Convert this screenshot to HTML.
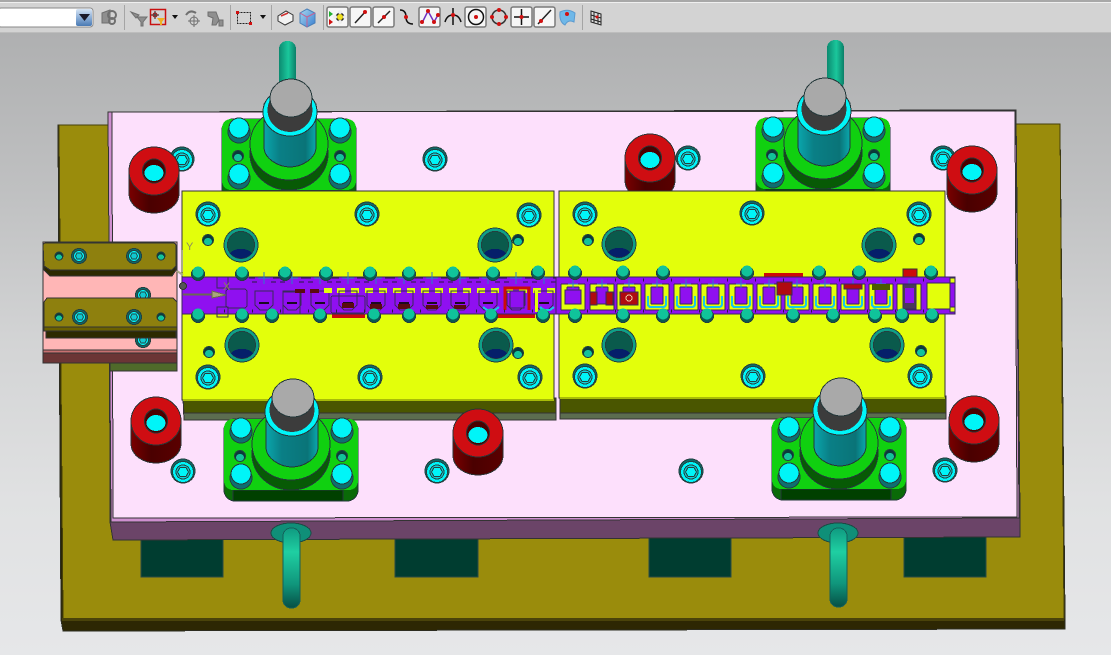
<!DOCTYPE html>
<html><head><meta charset="utf-8"><title>CAD stamping die</title>
<style>html,body{margin:0;padding:0;width:1111px;height:655px;overflow:hidden;background:#d0d0d0}svg{display:block}</style></head>
<body>
<svg xmlns="http://www.w3.org/2000/svg" width="1111" height="655" viewBox="0 0 1111 655" font-family="'Liberation Sans',sans-serif">
<defs>
<linearGradient id="bg" x1="0" y1="0" x2="0" y2="1"><stop offset="0" stop-color="#afb0b1"/><stop offset=".25" stop-color="#bfc0c1"/><stop offset=".5" stop-color="#d3d4d5"/><stop offset=".75" stop-color="#e0e1e2"/><stop offset="1" stop-color="#e6e7e9"/></linearGradient>
<linearGradient id="rod" x1="0" y1="0" x2="1" y2="0"><stop offset="0" stop-color="#0c8a70"/><stop offset=".55" stop-color="#1ac79c"/><stop offset="1" stop-color="#0b7f68"/></linearGradient>
<linearGradient id="rodv" x1="0" y1="0" x2="0" y2="1"><stop offset="0" stop-color="#0f9a80"/><stop offset=".3" stop-color="#1fcfa2"/><stop offset=".7" stop-color="#10967c"/><stop offset="1" stop-color="#064f45"/></linearGradient>
<linearGradient id="teal" x1="0" y1="0" x2="1" y2="0"><stop offset="0" stop-color="#0aa6ac"/><stop offset=".3" stop-color="#0a7f86"/><stop offset=".8" stop-color="#0a7478"/><stop offset="1" stop-color="#0aa8ae"/></linearGradient>
<linearGradient id="red" x1="0" y1="0" x2="1" y2="0"><stop offset="0" stop-color="#7a0000"/><stop offset=".4" stop-color="#4a0000"/><stop offset="1" stop-color="#5a0000"/></linearGradient>
<linearGradient id="btn" x1="0" y1="0" x2="0" y2="1"><stop offset="0" stop-color="#d6e4f4"/><stop offset=".5" stop-color="#8eb0d8"/><stop offset="1" stop-color="#4a7ab4"/></linearGradient>
<linearGradient id="cube" x1="0" y1="0" x2="1" y2="1"><stop offset="0" stop-color="#a8d8f0"/><stop offset="1" stop-color="#3a7fd0"/></linearGradient>

<g id="screw" stroke="#24403f" stroke-width="1">
<circle r="12" fill="#0d6a6a"/>
<circle cy="1" r="10.500" fill="#00f5f8"/>
<circle cy="1" r="7" fill="#10d0d8"/>
<polygon points="-5.500,1 -3,-3.500 3,-3.500 5.500,1 3,5.500 -3,5.500" fill="#00f5f8"/>
</g>
<g id="smallscrew" stroke="#24403f" stroke-width="1">
<circle r="7.500" fill="#0d6a6a"/><circle r="5.500" fill="#00f5f8"/><polygon points="-3.500,0 -2,-3 2,-3 3.500,0 2,3 -2,3" fill="#12c8d0"/>
</g>
<g id="mini" stroke="#24403f" stroke-width="1"><circle r="5.500" fill="#0a3a3a"/><ellipse cy="1.500" rx="4" ry="3.500" fill="#12c39a" stroke="none"/></g>
<g id="mini2" stroke="#24403f" stroke-width="1"><circle r="4" fill="#0a3a3a"/><ellipse cy="1" rx="3" ry="2.500" fill="#12c39a" stroke="none"/></g>
<g id="bigh" stroke="#24403f" stroke-width="1">
<circle r="17" fill="#0fa088"/><circle r="13.500" fill="#0a5a4c"/>
<path d="M-11 8 A13 9 0 0 1 11 8 A14 14 0 0 1 -11 8Z" fill="#051f6a" stroke="none"/>
</g>
<g id="pin"><circle r="6.500" cy="2" fill="#0a5a50" stroke="#24403f"/><circle r="5.500" fill="#10c39a"/></g>
<g id="boss" stroke="#2b3535" stroke-width="1">
<path d="M-25 0 V22 C-25 35 -12 42 0 42 S25 35 25 22 V0Z" fill="url(#red)"/>
<ellipse rx="25" ry="24" fill="#cf0d12"/>
<ellipse rx="11.500" ry="12" fill="#4a0000"/>
<ellipse cy="2" rx="9.500" ry="8" fill="#00f5f8" stroke="none"/>
</g>
<g id="hole4"><circle cy="4" r="11" fill="#0e6f70" stroke="#24403f"/><circle r="10" fill="#00f5f8" stroke="#24403f"/></g>
<g id="pillar" stroke="#24383a" stroke-width="1">
<rect x="-69" y="40" width="134" height="82" rx="11" fill="#0a6a08"/>
<path d="M-60 111 H50 V122 H-60Z" fill="#004000"/>
<rect x="-69" y="40" width="134" height="71" rx="9" fill="#10d010" stroke="none"/>
<use href="#hole4" x="-52" y="49"/><use href="#hole4" x="49" y="49"/><use href="#hole4" x="-52" y="95"/><use href="#hole4" x="49" y="95"/>
<use href="#mini" x="-53" y="77"/><use href="#mini" x="49" y="77"/>
<ellipse cx="-2" cy="75" rx="39" ry="36" fill="#075a05"/>
<ellipse cx="-2" cy="65" rx="39" ry="36" fill="#10d010"/>
<path d="M-27 25 V68 C-27 80 -12 88 -1 88 S25 80 25 68 V25Z" fill="url(#teal)"/>
<ellipse cx="-1" cy="33" rx="27" ry="24" fill="#00f5f8"/>
<ellipse cx="-1" cy="31" rx="22.500" ry="22" fill="#3c3c3c" stroke="none"/>
<rect x="-21" y="19" width="42" height="12" fill="#3c3c3c" stroke="none"/>
<ellipse cy="19" rx="21" ry="19" fill="#a9a9a9"/>
</g>
<g id="sta0" fill="none" stroke="#3a2a5a" stroke-width="1">
<path d="M-6 -5 H6 M0 -11 V1" stroke="#2a80c8"/>
<path d="M-15 -5 H-9 M9 -5 H15 M-12 -1 H-7 M7 -1 H12" stroke="#2a1a40"/>
<path d="M-9 8 H9 V22 L4 27 H-4 L-9 22Z"/>
<path d="M-5 20 H5" stroke="#1a0a20" stroke-width="2"/>
</g>
<g id="sta">
<rect x="-11" y="5" width="8" height="5" fill="#e3ff0b"/><rect x="3" y="5" width="8" height="5" fill="#e3ff0b"/>
<use href="#sta0"/>
</g>
<g id="cell0" stroke="#3a2a5a" stroke-width="1">
<rect x="-12" y="0" width="24" height="26" rx="1" fill="#e3ff0b"/>
<rect x="-6" y="3" width="12" height="17" rx="1" fill="#8f10f0"/>
<path d="M-5 0 H5 M0 -5 V4" stroke="#2a80c8" fill="none"/>
</g>
<g id="cell">
<use href="#cell0"/>
<path d="M-9 12 V20 Q-9 23 -6 23 H6 Q9 23 9 20 V12" fill="none" stroke="#17c8e8" stroke-width="2"/>
</g>
</defs>

<!-- background -->
<rect y="33" width="1111" height="622" fill="url(#bg)"/>

<g shape-rendering="crispEdges">
<!-- base plate -->
<polygon points="58,125 1060,124 1065,619 1065,629 63,631 61,620" fill="#2d2703" stroke="#2c2c20"/>
<polygon points="59,125 1060,124 1064,619 63,620" fill="#9a8c0c" stroke="#46400a"/>
<rect x="62" y="618" width="1002" height="3" fill="#4a430a"/>

<!-- feet -->
<g fill="#003d30" stroke="#2b4a44">
<rect x="141" y="535" width="82" height="42"/><rect x="395" y="535" width="83" height="42"/><rect x="649" y="535" width="82" height="42"/><rect x="904" y="535" width="82" height="42"/>
</g>

<!-- pink plate -->
<polygon points="109,112 1016,110 1020,517 1020,537 113,540 110,522" fill="#6b4468" stroke="#333"/>
<polygon points="108,112 1016,110 1019,518 111,522" fill="#cf8fd0" stroke="#333"/>
<polygon points="112,112 1015,111 1017,517 113,518" fill="#fde0fc" stroke="#333"/>

<!-- lower rods + collars -->
<g stroke="#1c4a44">
<ellipse cx="291" cy="533" rx="20" ry="10" fill="#0f8f78"/>
<ellipse cx="838" cy="533" rx="20" ry="10" fill="#0f8f78"/>
</g>
<rect x="283" y="528" width="17" height="80" rx="8" fill="url(#rodv)" stroke="#14605a"/>
<rect x="830" y="528" width="17" height="79" rx="8" fill="url(#rodv)" stroke="#14605a"/>

<!-- upper rods -->
<rect x="279" y="41" width="17" height="50" rx="8" fill="url(#rod)"/>
<rect x="827" y="40" width="17" height="50" rx="8" fill="url(#rod)"/>

<!-- pink-plate screws -->
<use href="#screw" x="182" y="159"/><use href="#screw" x="435" y="159"/><use href="#screw" x="688" y="158"/><use href="#screw" x="943" y="158"/>
<use href="#screw" x="183" y="471"/><use href="#screw" x="437" y="471"/><use href="#screw" x="691" y="471"/><use href="#screw" x="945" y="470"/>

<!-- top pillars (under yellow plates) -->
<use href="#pillar" x="291" y="79"/>
<use href="#pillar" x="825" y="78"/>

<!-- red bosses under plates -->
<use href="#boss" x="154" y="171"/><use href="#boss" x="650" y="158"/><use href="#boss" x="972" y="170"/>
<use href="#boss" x="156" y="421"/><use href="#boss" x="974" y="420"/>

<!-- yellow plates -->
<g stroke="#333">
<polygon points="183,398 556,398 556,420 184,420" fill="#5c6d50"/>
<polygon points="183,398 556,398 556,413 184,413" fill="#4a5600"/>
<polygon points="560,398 946,396 946,419 560,419" fill="#5c6d50"/>
<polygon points="560,398 946,396 946,413 560,413" fill="#4a5600"/>
<rect x="182" y="191" width="372" height="209" fill="#e3ff0b"/>
<rect x="559" y="191" width="386" height="207" fill="#e3ff0b"/>
</g>
<path d="M183 400 H554 M560 398 H945" stroke="#a8bc08" stroke-width="2"/>

<use href="#boss" x="478" y="433"/>

<!-- yellow plate screws -->
<use href="#screw" x="208" y="214"/><use href="#screw" x="367" y="214"/><use href="#screw" x="529" y="215"/><use href="#screw" x="585" y="214"/><use href="#screw" x="752" y="213"/><use href="#screw" x="919" y="214"/>
<use href="#screw" x="208" y="377"/><use href="#screw" x="370" y="377"/><use href="#screw" x="530" y="377"/><use href="#screw" x="585" y="376"/><use href="#screw" x="753" y="376"/><use href="#screw" x="920" y="376"/>
<use href="#bigh" x="241" y="245"/><use href="#bigh" x="495" y="245"/><use href="#bigh" x="619" y="244"/><use href="#bigh" x="879" y="245"/>
<use href="#bigh" x="242" y="345"/><use href="#bigh" x="496" y="345"/><use href="#bigh" x="619" y="345"/><use href="#bigh" x="887" y="345"/>
<use href="#mini" x="208" y="240"/><use href="#mini" x="209" y="352"/><use href="#mini" x="518" y="240"/><use href="#mini" x="518" y="353"/><use href="#mini" x="588" y="240"/><use href="#mini" x="588" y="352"/><use href="#mini" x="919" y="239"/><use href="#mini" x="921" y="351"/>

<!-- bottom pillars -->
<use href="#pillar" x="293" y="379"/>
<use href="#pillar" x="841" y="378"/>

<!-- strip: left solid -->
<rect x="332" y="313" width="33" height="5" fill="#cc0a0a"/>
<rect x="498" y="313" width="37" height="5" fill="#cc0a0a"/>
<rect x="764" y="273" width="39" height="6" fill="#cc0a0a"/>
<rect x="903" y="269" width="14" height="8" fill="#cc0a0a" stroke="#333"/>
<rect x="182" y="277" width="376" height="37" fill="#8f10f0" stroke="#3a2a5a"/>
<g fill="none" stroke="#3a2a5a">
<rect x="217" y="277" width="11" height="11"/><rect x="217" y="307" width="11" height="10"/>
<rect x="226" y="289" width="21" height="19" rx="3"/>
<rect x="283" y="292" width="17" height="22"/>
<rect x="331" y="296" width="34" height="17" rx="2"/>
</g>
<path d="M183 294 H212 V291 L226 295 L212 298 V295 H183" fill="#a9a77a" stroke="#6a6a50"/>
<circle cx="183" cy="286" r="3.500" fill="#555" stroke="#333"/>
<use href="#sta0" x="264" y="283"/><use href="#sta0" x="292" y="283"/><use href="#sta0" x="320" y="283"/>
<rect x="324" y="288" width="8" height="5" fill="#e3ff0b"/>
<use href="#sta" x="348" y="283"/><use href="#sta" x="376" y="283"/><use href="#sta" x="404" y="283"/><use href="#sta" x="432" y="283"/><use href="#sta" x="460" y="283"/><use href="#sta" x="488" y="283"/><use href="#sta" x="516" y="283"/><use href="#sta" x="544" y="283"/>
<g fill="#5a0a10">
<rect x="295" y="289" width="10" height="4"/><rect x="310" y="289" width="9" height="4"/>
<rect x="342" y="303" width="12" height="5"/><rect x="370" y="304" width="12" height="5"/><rect x="398" y="304" width="12" height="5"/>
<rect x="426" y="305" width="12" height="4"/><rect x="454" y="305" width="12" height="4"/>
</g>
<path d="M505 310 V288 H529 V310" fill="none" stroke="#cc0a0a" stroke-width="3"/>
<rect x="510" y="291" width="14" height="17" fill="#8f10f0" stroke="#3a2a5a"/>
<rect x="535" y="288" width="3" height="24" fill="#e3ff0b"/>
<path d="M483 307 L487 310 H495 L499 307 M540 307 L544 310 H550 L554 307" stroke="#17c8e8" stroke-width="2" fill="none"/>

<!-- strip: right lattice -->
<rect x="556" y="277" width="399" height="37" fill="#8f10f0" stroke="#3a2a5a"/>
<use href="#cell0" x="573" y="284"/><use href="#cell0" x="602" y="284"/><use href="#cell0" x="629" y="284"/><use href="#cell" x="657" y="284"/><use href="#cell" x="686" y="284"/><use href="#cell" x="713" y="284"/><use href="#cell" x="741" y="284"/><use href="#cell" x="769" y="284"/><use href="#cell" x="797" y="284"/><use href="#cell" x="825" y="284"/><use href="#cell" x="853" y="284"/><use href="#cell" x="881" y="284"/><use href="#cell0" x="909" y="284"/>
<rect x="927" y="283" width="23" height="26" fill="#e3ff0b" stroke="#3a2a5a"/>
<g fill="#b00a10" stroke="#3a2a5a">
<rect x="590" y="292" width="7" height="13"/><rect x="606" y="292" width="7" height="13"/>
<rect x="620" y="292" width="18" height="13"/>
<rect x="777" y="282" width="15" height="13"/>
<rect x="844" y="284" width="18" height="5"/>
</g>
<circle cx="629" cy="298" r="3" fill="none" stroke="#e8c8a0"/>
<rect x="872" y="284" width="18" height="6" fill="#4a5a00"/>
<rect x="903" y="284" width="13" height="25" fill="#4a3a5a" stroke="#3a2a5a"/>
<rect x="905" y="288" width="9" height="15" fill="#8f10f0"/>
<rect x="565" y="290" width="16" height="14" fill="#8f10f0" stroke="#3a2a5a"/>
<g stroke="#2a1a40" stroke-width="3" stroke-dasharray="1 27" fill="none">
<path d="M587 280 H955 M587 311 H955 M196 311 H550"/>
</g>
<rect x="950" y="278" width="5" height="5" fill="#e3ff0b" stroke="#3a2a5a"/>
<rect x="950" y="307" width="5" height="5" fill="#e3ff0b" stroke="#3a2a5a"/>

<!-- pilot pins -->
<use href="#pin" x="198" y="272"/><use href="#pin" x="242" y="272"/><use href="#pin" x="285" y="272"/><use href="#pin" x="326" y="272"/><use href="#pin" x="370" y="272"/><use href="#pin" x="409" y="272"/><use href="#pin" x="453" y="272"/><use href="#pin" x="493" y="272"/><use href="#pin" x="538" y="271"/>
<use href="#pin" x="575" y="271"/><use href="#pin" x="623" y="271"/><use href="#pin" x="663" y="271"/><use href="#pin" x="747" y="271"/><use href="#pin" x="819" y="271"/><use href="#pin" x="859" y="271"/><use href="#pin" x="931" y="271"/>
<use href="#pin" x="198" y="314"/><use href="#pin" x="242" y="314"/><use href="#pin" x="272" y="314"/><use href="#pin" x="320" y="314"/><use href="#pin" x="374" y="314"/><use href="#pin" x="409" y="314"/><use href="#pin" x="453" y="314"/><use href="#pin" x="491" y="314"/><use href="#pin" x="543" y="314"/>
<use href="#pin" x="575" y="314"/><use href="#pin" x="623" y="314"/><use href="#pin" x="663" y="314"/><use href="#pin" x="707" y="314"/><use href="#pin" x="747" y="314"/><use href="#pin" x="793" y="314"/><use href="#pin" x="833" y="314"/><use href="#pin" x="875" y="314"/><use href="#pin" x="902" y="314"/><use href="#pin" x="932" y="314"/>

<!-- side guide block -->
<g stroke="#333">
<rect x="110" y="362" width="67" height="9" fill="#4f6a2a"/>
<rect x="43" y="242" width="134" height="108" fill="#ffb6b6"/>
<use href="#smallscrew" x="143" y="295"/><use href="#smallscrew" x="143" y="340"/>
<rect x="43" y="350" width="134" height="4" fill="#c87070"/>
<rect x="43" y="353" width="134" height="10" fill="#6b3535"/>
<path d="M43 245 Q43 243 46 243 H173 Q176 243 176 246 V270 L172 276 H50 L44 270Z" fill="#2d2a00"/>
<path d="M43 245 Q43 243 46 243 H173 Q176 243 176 246 V266 L172 270 H50 L44 266Z" fill="#8e800e"/>
<path d="M47 298 H173 L177 302 V327 H44 V302Z" fill="#8e800e"/>
<rect x="44" y="327" width="133" height="4" fill="#6a6000"/>
<rect x="46" y="331" width="130" height="7" fill="#2d2a00"/>
</g>
<use href="#mini2" x="59" y="256"/><use href="#smallscrew" x="79" y="256"/><use href="#smallscrew" x="134" y="256"/><use href="#mini2" x="161" y="256"/>
<use href="#mini2" x="59" y="317"/><use href="#smallscrew" x="80" y="317"/><use href="#smallscrew" x="134" y="317"/><use href="#mini2" x="161" y="317"/>
</g>

<!-- triad -->
<text x="186" y="250" font-size="11" fill="#8a8a60">Y</text>
<text x="223" y="290" font-size="11" fill="#8a8a50">X</text>
<path d="M182 250 V272 M177 271 L183 275" stroke="#a9a98a" stroke-width="2" fill="none"/>

<!-- toolbar -->
<rect width="1111" height="33" fill="#d3d3d3"/>
<rect width="1111" height="2" fill="#a8a8a8"/>
<rect y="2" width="1111" height="1" fill="#efefef"/>
<rect y="32" width="1111" height="1" fill="#bdbdbd"/>
<g fill="#f4f4f4" stroke="#a5a5a5">
<path d="M124.500 5 V30 M230.500 5 V30 M271.500 5 V30 M323.500 5 V30 M582.500 5 V30"/>
</g>
<rect x="-2" y="8" width="95" height="19" rx="3" fill="#fff" stroke="#8a8a8a"/>
<rect x="76" y="9" width="16" height="17" rx="2" fill="url(#btn)"/>
<polygon points="79,14 90,14 84.500,21" fill="#1a1a2a"/>
<!-- greyed -->
<g fill="#8f8f8f" stroke="#6f6f6f">
<path d="M102 13 L110 10 V23 H102Z"/><circle cx="112" cy="15" r="4" fill="none" stroke-width="2"/><circle cx="112" cy="21" r="3" fill="none" stroke-width="2"/>
<path d="M131 12 L139 15 L136 18 Z"/><polygon points="137,17 147,17 143,22 143,26 141,26 141,22"/>
<path d="M186 15 Q190 9 196 13" fill="none" stroke-width="2"/><circle cx="194" cy="21" r="4" fill="none"/><path d="M194 15 V27 M188 21 H200" fill="none"/>
<path d="M208 12 L216 12 L219 20 L216 25 H212 L213 18 L208 16Z"/><rect x="219" y="20" width="4" height="6"/>
</g>
<rect x="150.500" y="9.500" width="15" height="15" fill="none" stroke="#c81010" stroke-width="1.500"/>
<path d="M155 11 V19 M151 15 H159" stroke="#222"/>
<circle cx="155" cy="15" r="2" fill="none" stroke="#9a1010"/>
<polygon points="157,18 165,18 162,22 162,25 160,25 160,22" fill="#f0b020"/>
<polygon points="172,15 178,15 175,19" fill="#111"/>
<rect x="237.500" y="12.500" width="13" height="11" fill="none" stroke="#222" stroke-dasharray="2 1"/>
<rect x="236" y="11" width="3" height="3" fill="#d01010"/><rect x="249" y="22" width="3" height="3" fill="#d01010"/>
<polygon points="260,15 266,15 263,19" fill="#111"/>
<!-- cubes -->
<path d="M278 16 L286 11 L293 15 V21 L285 25 L278 21Z" fill="#f2f2f2" stroke="#333"/><path d="M281 16 L288 13" stroke="#d03030" stroke-width="1.500"/>
<path d="M300 13 L307 9 L315 13 V23 L307 27 L300 23Z" fill="url(#cube)" stroke="#4a7fb8"/><path d="M300 13 L307 17 L315 13 M307 17 V27" stroke="#c86090" fill="none"/>
<!-- boxed buttons -->
<g fill="#f6f6f6" stroke="#7a7a7a" stroke-width="1.500">
<rect x="327" y="7" width="21" height="20" rx="2"/><rect x="350" y="7" width="21" height="20" rx="2"/><rect x="373" y="7" width="21" height="20" rx="2"/>
<rect x="419" y="7" width="21" height="20" rx="2"/><rect x="465" y="7" width="21" height="20" rx="2"/><rect x="511" y="7" width="21" height="20" rx="2"/><rect x="534" y="7" width="21" height="20" rx="2"/>
</g>
<polygon points="329,11 333,14 329,17" fill="#20b030"/><polygon points="329,19 333,22 329,25" fill="#d01010"/>
<path d="M340 11 L346 17 L340 23 L334 17Z" fill="#222"/><circle cx="340" cy="17" r="3" fill="#f0e020"/>
<circle cx="340" cy="12" r="2" fill="#eee"/><circle cx="340" cy="22" r="2" fill="#eee"/><circle cx="335" cy="17" r="2" fill="#eee"/><circle cx="345" cy="17" r="2" fill="#eee"/>
<path d="M355 23 L366 11" stroke="#222" stroke-width="1.500"/><circle cx="365" cy="12" r="2" fill="#d01010"/>
<path d="M378 23 L390 11" stroke="#222" stroke-width="1.500"/><circle cx="384" cy="17" r="2" fill="#d01010"/>
<path d="M400 10 Q406 10 406 17 Q406 24 413 24" fill="none" stroke="#111" stroke-width="1.500"/><circle cx="406" cy="17" r="2" fill="#d01010"/>
<path d="M422 23 L428 11 L434 22 L438 15" fill="none" stroke="#7030c0" stroke-width="1.500"/><circle cx="422" cy="22" r="2" fill="#d01010"/><circle cx="428" cy="11" r="2" fill="#d01010"/><circle cx="434" cy="22" r="2" fill="#d01010"/><circle cx="438" cy="15" r="2" fill="#d01010"/>
<path d="M445 22 Q447 15 453 15 Q459 15 461 22 M453 8 V25" fill="none" stroke="#111" stroke-width="1.500"/><circle cx="453" cy="15" r="2" fill="#d01010"/>
<circle cx="476" cy="17" r="7.500" fill="none" stroke="#111" stroke-width="1.500"/><circle cx="476" cy="17" r="2" fill="#d01010"/>
<circle cx="499" cy="17" r="7" fill="none" stroke="#333" stroke-width="1.500"/><circle cx="499" cy="10" r="2" fill="#d01010"/><circle cx="499" cy="24" r="2" fill="#d01010"/><circle cx="492" cy="17" r="2" fill="#d01010"/><circle cx="506" cy="17" r="2" fill="#d01010"/>
<path d="M521.500 9 V25 M514 17 H529" stroke="#111" stroke-width="1.500"/><circle cx="521.500" cy="17" r="2" fill="#d01010"/>
<path d="M538 24 L551 10" stroke="#222" stroke-width="1.500"/><circle cx="541" cy="21" r="2" fill="#d01010"/>
<path d="M560 12 Q568 8 575 13 L574 22 Q568 19 565 25 Q559 22 560 12Z" fill="#6fb8e8" stroke="#5a9ad0"/><circle cx="567" cy="14" r="2" fill="#d01010"/>
<path d="M591 11 L601 14 V25 L591 22Z M594 12 V23 M598 13 V24 M591 15 L601 18 M591 19 L601 22" fill="#ddd" stroke="#222"/><circle cx="597" cy="17" r="1.500" fill="#d01010"/>
</svg>
</body></html>
